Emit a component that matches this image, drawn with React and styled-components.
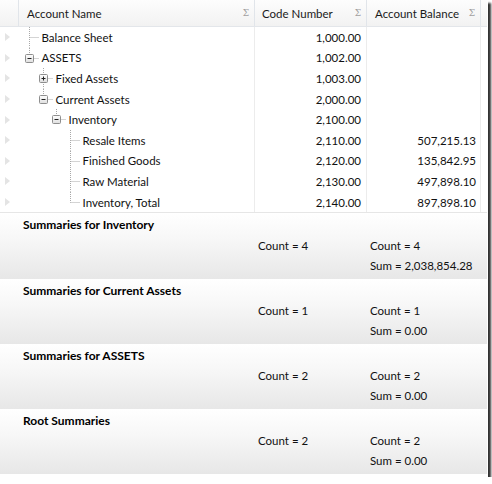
import React from 'react'
import styled, { createGlobalStyle } from 'styled-components'

const GlobalStyle = createGlobalStyle`
    html, body {
        margin: 0;
        padding: 0;
        background: #fff;
    }
    body {
        font-family: Lato, "Open Sans", sans-serif;
        font-size: 11.5px;
        color: #111;
    }
`

const COLS = '19px 236px 112px 114px 1fr'
const ROW_H = 20.6

const Frame = styled.div`
    width: 488px;
    height: 477px;
    box-sizing: border-box;
    padding-right: 1px;
    background: #fff;
    overflow: hidden;
    box-shadow: 3px 3px 2px rgba(0, 0, 0, 0.8);
`

const Header = styled.div`
    display: grid;
    grid-template-columns: ${COLS};
    height: 27px;
    box-sizing: border-box;
    background: linear-gradient(#fdfdfd, #f2f2f2);
    border-bottom: 1px solid #e3e6ea;
`

const HeaderCell = styled.div`
    display: flex;
    align-items: center;
    justify-content: space-between;
    padding: 0 5px 0 ${props => props.pad || 8}px;
    border-right: 1px solid #e1e5ea;
    color: #1a1a1a;
`

const Sigma = styled.span`
    font-size: 9px;
    color: #a0a0a0;
    font-family: "DejaVu Serif", serif;
`

const Body = styled.div`
    border-bottom: 1px solid #e6e6e6;
`

const Row = styled.div`
    display: grid;
    grid-template-columns: ${COLS};
    height: ${ROW_H}px;
`

const Indicator = styled.div`
    display: flex;
    align-items: center;
    padding-left: 5px;
`

const NameCell = styled.div`
    display: flex;
    align-items: center;
    border-right: 1px solid #ececec;
    white-space: nowrap;
`

const Label = styled.span`
    margin-left: 3px;
`

const NumCell = styled.div`
    display: flex;
    align-items: center;
    justify-content: flex-end;
    padding-right: ${props => props.pad || 5}px;
    border-right: 1px solid #ececec;
`

const Summary = styled.div`
    display: grid;
    grid-template-columns: ${COLS};
    grid-auto-rows: 20px;
    height: 65.2px;
    box-sizing: border-box;
    padding-top: 2px;
    background: linear-gradient(#ffffff 0%, #f7f7f7 40%, #e7e7e7 100%);
`

const SummaryTitle = styled.div`
    grid-column: 1 / -1;
    display: flex;
    align-items: center;
    padding-left: 23px;
    font-weight: bold;
    font-size: 12px;
    color: #000;
    margin-bottom: 1px;
`

const SummaryValue = styled.div`
    grid-column: ${props => props.col};
    display: flex;
    align-items: center;
    padding-left: 3px;
`

const rows = [
    { name: 'Balance Sheet', level: 0, code: '1,000.00', bal: '', type: 'leaf', next: true },
    { name: 'ASSETS', level: 0, code: '1,002.00', bal: '', type: 'open', next: false },
    { name: 'Fixed Assets', level: 1, code: '1,003.00', bal: '', type: 'closed', next: true },
    { name: 'Current Assets', level: 1, code: '2,000.00', bal: '', type: 'open', next: false },
    { name: 'Inventory', level: 2, code: '2,100.00', bal: '', type: 'open', next: false },
    { name: 'Resale Items', level: 3, code: '2,110.00', bal: '507,215.13', type: 'leaf', next: true },
    { name: 'Finished Goods', level: 3, code: '2,120.00', bal: '135,842.95', type: 'leaf', next: true },
    { name: 'Raw Material', level: 3, code: '2,130.00', bal: '497,898.10', type: 'leaf', next: true },
    { name: 'Inventory, Total', level: 3, code: '2,140.00', bal: '897,898.10', type: 'leaf', next: false },
]

const summaries = [
    { title: 'Summaries for Inventory', code: 'Count = 4', bal: ['Count = 4', 'Sum = 2,038,854.28'] },
    { title: 'Summaries for Current Assets', code: 'Count = 1', bal: ['Count = 1', 'Sum = 0.00'] },
    { title: 'Summaries for ASSETS', code: 'Count = 2', bal: ['Count = 2', 'Sum = 0.00'] },
    { title: 'Root Summaries', code: 'Count = 2', bal: ['Count = 2', 'Sum = 0.00'] },
]

const RowArrow = () => (
    <svg width="5" height="8" viewBox="0 0 5 8">
        <polygon points="0,0 5,4 0,8" fill="#e4e4e4" />
    </svg>
)

// dotted tree connectors + expander box for one row
function TreeLines({ level, type, next }) {
    const cx = 10.5 + Math.round(13.7 * level)
    const mid = 10.5
    const line = { stroke: '#a8a8a8', strokeWidth: 1, strokeDasharray: '1 1' }
    return (
        <svg width={cx + 9} height={ROW_H} style={{ flex: 'none' }}>
            <line x1={cx} y1={0} x2={cx} y2={next ? ROW_H : mid} {...line} />
            <line x1={cx} y1={mid} x2={cx + 9} y2={mid} {...line} />
            {type !== 'leaf' && (
                <g>
                    <defs>
                        <linearGradient id="exp" x1="0" y1="0" x2="0" y2="1">
                            <stop offset="0" stopColor="#ffffff" />
                            <stop offset="1" stopColor="#dedede" />
                        </linearGradient>
                    </defs>
                    <rect x={cx - 4} y={mid - 4} width="8" height="8" rx="1" fill="url(#exp)" stroke="#8e8e8e" />
                    <line x1={cx - 2} y1={mid} x2={cx + 2} y2={mid} stroke="#222" />
                    {type === 'closed' && <line x1={cx} y1={mid - 2} x2={cx} y2={mid + 2} stroke="#222" />}
                </g>
            )}
        </svg>
    )
}

export default function App() {
    return (
        <>
            <GlobalStyle />
            <Frame>
                <Header>
                    <HeaderCell />
                    <HeaderCell>Account Name<Sigma>Σ</Sigma></HeaderCell>
                    <HeaderCell pad={7}>Code Number<Sigma>Σ</Sigma></HeaderCell>
                    <HeaderCell>Account Balance<Sigma>Σ</Sigma></HeaderCell>
                </Header>
                <Body>
                    {rows.map(r => (
                        <Row key={r.name}>
                            <Indicator><RowArrow /></Indicator>
                            <NameCell>
                                <TreeLines level={r.level} type={r.type} next={r.next} />
                                <Label>{r.name}</Label>
                            </NameCell>
                            <NumCell>{r.code}</NumCell>
                            <NumCell pad={4}>{r.bal}</NumCell>
                        </Row>
                    ))}
                </Body>
                {summaries.map(s => (
                    <Summary key={s.title}>
                        <SummaryTitle>{s.title}</SummaryTitle>
                        <SummaryValue col={3}>{s.code}</SummaryValue>
                        <SummaryValue col={4}>{s.bal[0]}</SummaryValue>
                        <SummaryValue col={4}>{s.bal[1]}</SummaryValue>
                    </Summary>
                ))}
            </Frame>
        </>
    )
}
